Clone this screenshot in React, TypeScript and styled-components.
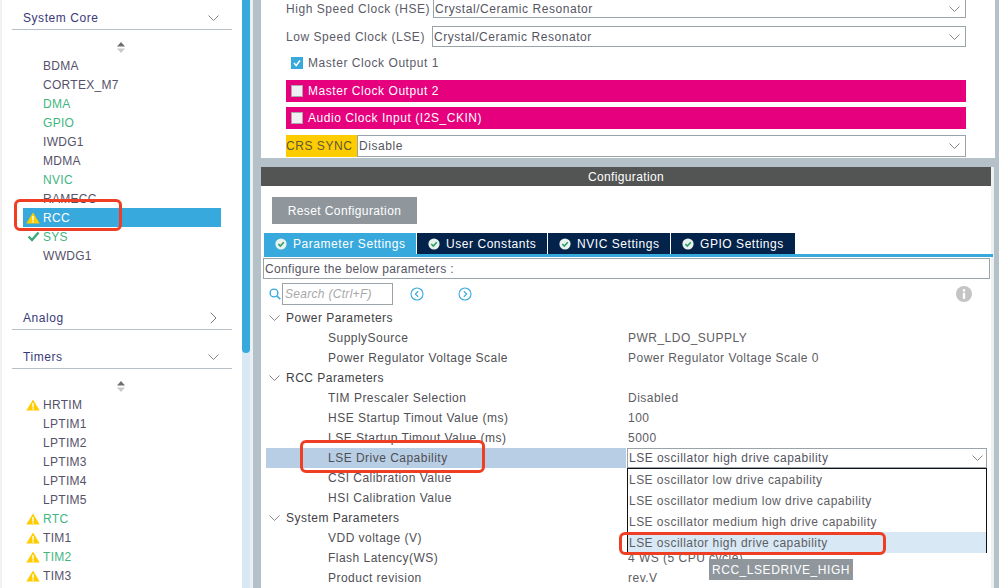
import React from 'react';
import styled, { createGlobalStyle } from 'styled-components';

const GlobalStyle = createGlobalStyle`
  html, body {
    margin: 0;
    padding: 0;
    background: #fff;
  }
`;

const Page = styled.div`
  position: relative;
  display: flex;
  width: 999px;
  height: 588px;
  overflow: hidden;
  background: #fff;
  font-family: "Liberation Sans", Arial, sans-serif;
  font-size: 12px;
  letter-spacing: 0.3px;
  color: #4a4a55;
`;

/* ---------- left column ---------- */

const Sidebar = styled.aside`
  width: 242px;
  height: 588px;
  box-sizing: border-box;
  border-left: 2px solid #f1f1f1;
  padding: 8px 10px 0 10px;
  background: #fff;
  flex: none;
  overflow: hidden;
`;

const GroupHead = styled.div<{ $gap?: number }>`
  display: flex;
  align-items: center;
  justify-content: space-between;
  height: 19px;
  margin-top: ${p => p.$gap ?? 0}px;
  padding: 0 13px 2px 11px;
  border-bottom: 1px solid #b7c0c8;
  color: #39397a;
  letter-spacing: 0.55px;
`;

const SortArrows = styled.div`
  display: flex;
  justify-content: center;
  height: 10px;
  padding: 12px 2px 4px 0;
`;

const PeripheralList = styled.div`
  display: flex;
  flex-direction: column;
`;

const Peripheral = styled.div<{ $tone?: 'ok' | 'selected' }>`
  display: flex;
  align-items: center;
  height: 19px;
  margin-left: 11px;
  width: 198px;
  background: ${p => (p.$tone === 'selected' ? '#38a9dd' : 'transparent')};
  color: ${p => (p.$tone === 'ok' ? '#3fb57f' : p.$tone === 'selected' ? '#fff' : '#55526a')};
`;

const StatusSlot = styled.span`
  display: flex;
  align-items: center;
  justify-content: center;
  width: 20px;
  flex: none;
`;

const ScrollTrack = styled.div`
  width: 8px;
  height: 588px;
  flex: none;
  background: #d8e8f5;
`;

const ScrollThumb = styled.div`
  width: 8px;
  height: 353px;
  background: #38a9dd;
  border-radius: 0 0 4px 4px;
`;

const Splitter = styled.div`
  width: 8px;
  flex: none;
  border-left: 3px solid #ebf0f3;
  background: #b5c1c9;
`;

/* ---------- right column ---------- */

const Main = styled.main`
  display: flex;
  flex-direction: column;
  width: 738px;
  flex: none;
  height: 588px;
  background: #b5c1c9;
`;

const ModePanel = styled.section`
  width: 734px;
  height: 158px;
  flex: none;
  box-sizing: border-box;
  margin-bottom: 9px;
  padding: 0 29px 0 25px;
  background: #fff;
  display: flex;
  flex-direction: column;
  letter-spacing: 0.55px;
`;

const ModeRow = styled.div<{ $h: number; $mt?: number }>`
  display: flex;
  align-items: center;
  height: ${p => p.$h}px;
  margin-top: ${p => p.$mt ?? 0}px;
  color: #5b5b68;
`;

const ModeLabel = styled.span<{ $w: number }>`
  width: ${p => p.$w}px;
  flex: none;
  white-space: nowrap;
`;

const Select = styled.div`
  flex: 1;
  min-width: 0;
  height: 100%;
  box-sizing: border-box;
  display: flex;
  align-items: center;
  justify-content: space-between;
  border: 1px solid #9aa3a8;
  padding: 0 5px 0 1px;
  color: #55555f;
  background: #fff;
  white-space: nowrap;
`;

const ClippedSelect = styled(Select)`
  border-top: none;
`;

const CheckRow = styled.div<{ $pink?: boolean; $mt: number }>`
  display: flex;
  align-items: center;
  gap: 5px;
  height: 22px;
  margin-top: ${p => p.$mt}px;
  padding-left: 5px;
  background: ${p => (p.$pink ? '#e6007e' : 'transparent')};
  color: ${p => (p.$pink ? '#fff' : '#5b5b68')};
`;

const CheckBox = styled.span<{ $on?: boolean }>`
  width: 12px;
  height: 12px;
  box-sizing: border-box;
  display: flex;
  align-items: center;
  justify-content: center;
  flex: none;
  background: ${p => (p.$on ? '#38a9dd' : '#eef0f1')};
  border: 1px solid ${p => (p.$on ? '#38a9dd' : '#a8a8a8')};
`;

const SyncLabel = styled.span`
  width: 71px;
  flex: none;
  height: 100%;
  display: flex;
  align-items: center;
  background: #ffcc00;
  color: #5c5a3a;
  white-space: nowrap;
`;

const ConfigPanel = styled.section`
  width: 733px;
  flex: 1;
  min-height: 0;
  box-sizing: border-box;
  border-right: 3px solid #ebf0f3;
  background: #fff;
  display: flex;
  flex-direction: column;
`;

const ConfigHead = styled.div`
  height: 19px;
  flex: none;
  background: #535554;
  color: #fff;
  display: flex;
  align-items: center;
  justify-content: center;
  letter-spacing: 0.35px;
`;

const ResetButton = styled.div`
  width: 145px;
  height: 27px;
  margin: 11px 0 9px 11px;
  flex: none;
  background: #8f979d;
  color: #fff;
  display: flex;
  align-items: center;
  justify-content: center;
  letter-spacing: 0.4px;
`;

const TabStrip = styled.div`
  display: flex;
  gap: 1px;
  height: 21px;
  margin: 0 -2px 0 3px;
  flex: none;
  border-bottom: 3px solid #38a9dd;
`;

const Tab = styled.div<{ $active?: boolean; $w: number }>`
  width: ${p => p.$w}px;
  display: flex;
  align-items: center;
  box-sizing: border-box;
  padding-left: 11px;
  gap: 6px;
  background: ${p => (p.$active ? '#38a9dd' : '#03234b')};
  color: #fff;
  letter-spacing: 0.55px;
  white-space: nowrap;
`;

const ConfigureBox = styled.div`
  height: 21px;
  margin: 1px 1px 0 2px;
  flex: none;
  box-sizing: border-box;
  border: 1px solid #9aa3a8;
  padding-left: 1px;
  display: flex;
  align-items: center;
  color: #55555f;
  letter-spacing: 0.36px;
`;

const SearchBar = styled.div`
  height: 22px;
  margin-top: 4px;
  padding: 0 19px 0 8px;
  flex: none;
  display: flex;
  align-items: center;
`;

const SearchInput = styled.div`
  width: 111px;
  height: 22px;
  margin-left: 1px;
  box-sizing: border-box;
  border: 1px solid #9aa3a8;
  padding-left: 2px;
  display: flex;
  align-items: center;
  color: #a8a8a8;
  font-style: italic;
`;

const NavButton = styled.span<{ $ml: number }>`
  display: flex;
  margin-left: ${p => p.$ml}px;
`;

const InfoSlot = styled.span`
  margin-left: auto;
  display: flex;
`;

const Tree = styled.div`
  margin-top: 3px;
  display: flex;
  flex-direction: column;
  color: #4f4f55;
  letter-spacing: 0.48px;
`;

const GroupRow = styled.div`
  display: flex;
  align-items: center;
  height: 20px;
  padding-left: 8px;
  gap: 6px;
  color: #3f3f46;
`;

const ParamRow = styled.div<{ $hot?: boolean }>`
  display: grid;
  grid-template-columns: 300px 362px;
  align-items: center;
  height: 20px;
  margin-left: 5px;
  padding-left: 62px;
  background: ${p => (p.$hot ? 'linear-gradient(#b8cee4, #b8cee4) left / 360px 100% no-repeat' : 'transparent')};
`;

const ParamValue = styled.span`
  color: #5d5d63;
  white-space: nowrap;
`;

const InlineSelect = styled(Select)`
  height: 20px;
  width: 360px;
  margin-left: -1px;
  padding: 0 3px 0 1px;
`;

/* ---------- things lying over the content ---------- */

const DropList = styled.div`
  position: absolute;
  left: 627px;
  top: 468px;
  width: 360px;
  height: 85px;
  box-sizing: border-box;
  border: 1px solid #111;
  background: #fff;
  display: flex;
  flex-direction: column;
  letter-spacing: 0.46px;
`;

const DropOption = styled.div<{ $hot?: boolean }>`
  height: 21px;
  flex: none;
  display: flex;
  align-items: center;
  padding-left: 1px;
  color: #5d5d63;
  background: ${p => (p.$hot ? '#d8e8f5' : '#fff')};
`;

const Tip = styled.div`
  position: absolute;
  left: 709px;
  top: 559px;
  width: 144px;
  height: 21px;
  background: #8f979d;
  color: #fff;
  display: flex;
  align-items: center;
  justify-content: center;
  letter-spacing: 0.55px;
`;

const Mark = styled.div<{ $x: number; $y: number; $w: number; $h: number }>`
  position: absolute;
  left: ${p => p.$x}px;
  top: ${p => p.$y}px;
  width: ${p => p.$w}px;
  height: ${p => p.$h}px;
  box-sizing: border-box;
  border: 3px solid #ee3f24;
  border-radius: 6px;
`;

/* ---------- icons ---------- */

const Warn = () => (
  <svg width="14" height="12" viewBox="0 0 14 12">
    <path d="M7 .5 13.7 11.5H.3Z" fill="#ffcc00" />
    <rect x="6.3" y="4" width="1.4" height="4.5" fill="#fff" />
    <rect x="6.3" y="9.2" width="1.4" height="1.4" fill="#fff" />
  </svg>
);

const Tick = () => (
  <svg width="13" height="11" viewBox="0 0 13 11">
    <path d="M1.5 5.5 5 9 11.5 1.5" fill="none" stroke="#3da878" strokeWidth="2.4" />
  </svg>
);

const ChevronDown = () => (
  <svg width="11" height="6" viewBox="0 0 11 6">
    <path d="M.5.5 5.5 5.5 10.5.5" fill="none" stroke="#888" strokeWidth="1" />
  </svg>
);

const RightChevronSvg = styled.svg`
  margin-right: 2px;
`;

const ChevronRight = () => (
  <RightChevronSvg width="7" height="12" viewBox="0 0 7 12">
    <path d="M.7.7 6 6 .7 11.3" fill="none" stroke="#777" strokeWidth="1" />
  </RightChevronSvg>
);

const Sort = () => (
  <svg width="8" height="11" viewBox="0 0 8 11">
    <path d="M4 0 8 4.5H0Z" fill="#6e6e6e" />
    <path d="M4 11 8 6.5H0Z" fill="#c9c9c9" />
  </svg>
);

const TabCheck = () => (
  <svg width="12" height="12" viewBox="0 0 12 12">
    <circle cx="6" cy="6" r="5.6" fill="#e9f3ee" />
    <path d="M3.3 6 5.3 8 8.8 4.3" fill="none" stroke="#2e9e68" strokeWidth="1.6" />
  </svg>
);

const SearchIcon = () => (
  <svg width="12" height="12" viewBox="0 0 12 12">
    <circle cx="5" cy="5" r="3.9" fill="none" stroke="#38a9dd" strokeWidth="1.4" />
    <path d="M8 8 11.3 11.3" stroke="#38a9dd" strokeWidth="1.6" />
  </svg>
);

const CircleArrow = ({ right }: { right?: boolean }) => (
  <svg width="14" height="14" viewBox="0 0 14 14">
    <circle cx="7" cy="7" r="6" fill="none" stroke="#38a9dd" strokeWidth="1.1" />
    <path d={right ? 'M5.8 4.2 8.6 7 5.8 9.8' : 'M8.2 4.2 5.4 7 8.2 9.8'} fill="none" stroke="#38a9dd" strokeWidth="1.2" />
  </svg>
);

const Info = () => (
  <svg width="16" height="16" viewBox="0 0 16 16">
    <circle cx="8" cy="8" r="8" fill="#c4c4c4" />
    <rect x="6.8" y="6.8" width="2.4" height="6" fill="#fff" />
    <rect x="6.8" y="3.2" width="2.4" height="2.3" fill="#fff" />
  </svg>
);

/* ---------- data ---------- */

type Periph = { name: string; tone?: 'ok' | 'selected'; icon?: 'warn' | 'tick' };

const coreItems: Periph[] = [
  { name: 'BDMA' },
  { name: 'CORTEX_M7' },
  { name: 'DMA', tone: 'ok' },
  { name: 'GPIO', tone: 'ok' },
  { name: 'IWDG1' },
  { name: 'MDMA' },
  { name: 'NVIC', tone: 'ok' },
  { name: 'RAMECC' },
  { name: 'RCC', tone: 'selected', icon: 'warn' },
  { name: 'SYS', tone: 'ok', icon: 'tick' },
  { name: 'WWDG1' },
];

const timerItems: Periph[] = [
  { name: 'HRTIM', icon: 'warn' },
  { name: 'LPTIM1' },
  { name: 'LPTIM2' },
  { name: 'LPTIM3' },
  { name: 'LPTIM4' },
  { name: 'LPTIM5' },
  { name: 'RTC', tone: 'ok', icon: 'warn' },
  { name: 'TIM1', icon: 'warn' },
  { name: 'TIM2', tone: 'ok', icon: 'warn' },
  { name: 'TIM3', icon: 'warn' },
];

const tabs = [
  { label: 'Parameter Settings', w: 152, active: true },
  { label: 'User Constants', w: 130 },
  { label: 'NVIC Settings', w: 122 },
  { label: 'GPIO Settings', w: 124 },
];

const dropOptions = [
  'LSE oscillator low drive capability',
  'LSE oscillator medium low drive capability',
  'LSE oscillator medium high drive capability',
];

const PeripheralRows = ({ items }: { items: Periph[] }) => (
  <PeripheralList>
    {items.map(item => (
      <Peripheral key={item.name} $tone={item.tone}>
        <StatusSlot>
          {item.icon === 'warn' && <Warn />}
          {item.icon === 'tick' && <Tick />}
        </StatusSlot>
        {item.name}
      </Peripheral>
    ))}
  </PeripheralList>
);

export default function App() {
  return (
    <Page>
      <GlobalStyle />
      <Sidebar>
        <GroupHead>
          System Core
          <ChevronDown />
        </GroupHead>
        <SortArrows>
          <Sort />
        </SortArrows>
        <PeripheralRows items={coreItems} />
        <GroupHead $gap={43}>
          Analog
          <ChevronRight />
        </GroupHead>
        <GroupHead $gap={17}>
          Timers
          <ChevronDown />
        </GroupHead>
        <SortArrows>
          <Sort />
        </SortArrows>
        <PeripheralRows items={timerItems} />
      </Sidebar>
      <ScrollTrack>
        <ScrollThumb />
      </ScrollTrack>
      <Splitter />
      <Main>
        <ModePanel>
          <ModeRow $h={18}>
            <ModeLabel $w={147}>High Speed Clock (HSE)</ModeLabel>
            <ClippedSelect>
              Crystal/Ceramic Resonator
              <ChevronDown />
            </ClippedSelect>
          </ModeRow>
          <ModeRow $h={21} $mt={8}>
            <ModeLabel $w={146}>Low Speed Clock (LSE)</ModeLabel>
            <Select>
              Crystal/Ceramic Resonator
              <ChevronDown />
            </Select>
          </ModeRow>
          <CheckRow $mt={5}>
            <CheckBox $on>
              <svg width="10" height="10" viewBox="0 0 10 10">
                <path d="M2 5 4.2 7.5 8 2.5" fill="none" stroke="#fff" strokeWidth="1.5" />
              </svg>
            </CheckBox>
            Master Clock Output 1
          </CheckRow>
          <CheckRow $pink $mt={6}>
            <CheckBox />
            Master Clock Output 2
          </CheckRow>
          <CheckRow $pink $mt={5}>
            <CheckBox />
            Audio Clock Input (I2S_CKIN)
          </CheckRow>
          <ModeRow $h={22} $mt={6}>
            <SyncLabel>CRS SYNC</SyncLabel>
            <Select>
              Disable
              <ChevronDown />
            </Select>
          </ModeRow>
        </ModePanel>
        <ConfigPanel>
          <ConfigHead>Configuration</ConfigHead>
          <ResetButton>Reset Configuration</ResetButton>
          <TabStrip>
            {tabs.map(tab => (
              <Tab key={tab.label} $w={tab.w} $active={tab.active}>
                <TabCheck />
                {tab.label}
              </Tab>
            ))}
          </TabStrip>
          <ConfigureBox>Configure the below parameters :</ConfigureBox>
          <SearchBar>
            <SearchIcon />
            <SearchInput>Search (Ctrl+F)</SearchInput>
            <NavButton $ml={17}>
              <CircleArrow />
            </NavButton>
            <NavButton $ml={34}>
              <CircleArrow right />
            </NavButton>
            <InfoSlot>
              <Info />
            </InfoSlot>
          </SearchBar>
          <Tree>
            <GroupRow>
              <ChevronDown />
              Power Parameters
            </GroupRow>
            <ParamRow>
              SupplySource
              <ParamValue>PWR_LDO_SUPPLY</ParamValue>
            </ParamRow>
            <ParamRow>
              Power Regulator Voltage Scale
              <ParamValue>Power Regulator Voltage Scale 0</ParamValue>
            </ParamRow>
            <GroupRow>
              <ChevronDown />
              RCC Parameters
            </GroupRow>
            <ParamRow>
              TIM Prescaler Selection
              <ParamValue>Disabled</ParamValue>
            </ParamRow>
            <ParamRow>
              HSE Startup Timout Value (ms)
              <ParamValue>100</ParamValue>
            </ParamRow>
            <ParamRow>
              LSE Startup Timout Value (ms)
              <ParamValue>5000</ParamValue>
            </ParamRow>
            <ParamRow $hot>
              LSE Drive Capability
              <InlineSelect>
                LSE oscillator high drive capability
                <ChevronDown />
              </InlineSelect>
            </ParamRow>
            <ParamRow>CSI Calibration Value</ParamRow>
            <ParamRow>HSI Calibration Value</ParamRow>
            <GroupRow>
              <ChevronDown />
              System Parameters
            </GroupRow>
            <ParamRow>VDD voltage (V)</ParamRow>
            <ParamRow>
              Flash Latency(WS)
              <ParamValue>4 WS (5 CPU cycle)</ParamValue>
            </ParamRow>
            <ParamRow>
              Product revision
              <ParamValue>rev.V</ParamValue>
            </ParamRow>
          </Tree>
        </ConfigPanel>
      </Main>
      <DropList>
        {dropOptions.map(option => (
          <DropOption key={option}>{option}</DropOption>
        ))}
        <DropOption $hot>LSE oscillator high drive capability</DropOption>
      </DropList>
      <Tip>RCC_LSEDRIVE_HIGH</Tip>
      <Mark $x={14} $y={199} $w={108} $h={32} />
      <Mark $x={300} $y={440} $w={185} $h={33} />
      <Mark $x={619} $y={532} $w={267} $h={23} />
    </Page>
  );
}
